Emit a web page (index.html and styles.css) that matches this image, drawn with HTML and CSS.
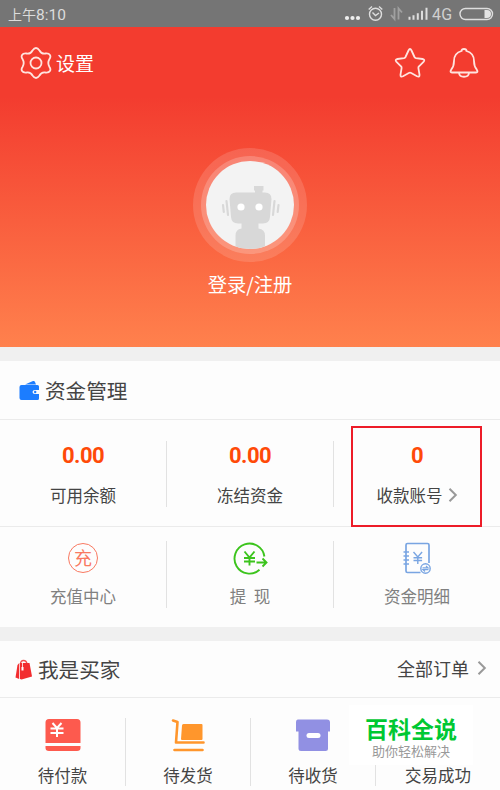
FILE: index.html
```html
<!DOCTYPE html>
<html lang="zh-CN"><head>
<meta charset="utf-8">
<title>我的</title>
<link rel="stylesheet" href="styles.css">
</head><body>

<div class="status">
<span class="time">上午<span class="digits">8:10</span></span>
<svg class="signals" width="156" height="27" viewBox="0 0 156 27" fill="none" stroke="#dedede" stroke-width="1.4">
<g fill="#eee" stroke="none"><circle cx="3" cy="18" r="2.1"/><circle cx="8.500" cy="18" r="2.1"/><circle cx="14" cy="18" r="2.1"/></g>
<circle cx="31.500" cy="14.200" r="6"/><path d="M28.500 12.500l3 3 3.500-2.500M24.700 9.500l3.300-3M38.300 9.500l-3.300-3"/>
<g stroke="#a0a0a0" stroke-width="1.800"><path d="M50.500 8v11l-3.500-4M54.500 19.500v-11l3.500 4"/></g>
<path d="M65.500 19.800v-3M69.500 19.800v-4.500M73.800 19.800v-6.500M78 19.800v-9M82.500 19.800v-12" stroke-width="2"/>
<text x="88" y="20" class="net">4G</text>
<rect x="116" y="8.500" width="32.500" height="11" rx="5.500"/><path d="M140.500 10h2.500a4 4 0 0 1 0 8h-2.500z" fill="#e4e4e4" stroke="none"/>
</svg>
</div>

<div class="hero">
<div class="bar">
<svg class="gear" width="32" height="34" viewBox="0 0 32 34"><path d="M12.500 4.500Q16 -0.500 19.500 4.500C21 7.500 22.500 8 25.500 7.500C30 7 31.500 10 29.500 13C27.700 16 27.700 18 29.500 21C31.500 24 30 27 25.500 26.500C22.500 26 21 26.500 19.500 29.500Q16 34.500 12.500 29.500C11 26.500 9.500 26 6.500 26.500C2 27 0.500 24 2.500 21C4.300 18 4.300 16 2.500 13C0.500 10 2 7 6.500 7.500C9.500 8 11 7.500 12.500 4.500Z"/><circle cx="16" cy="17" r="5.500"/></svg>
<span class="settings">设置</span>
<svg class="star" width="32" height="32" viewBox="0 0 32 32"><path d="M14.500 3.500Q16 .500 17.500 3.500L20.500 10Q21 11 22 11.200L28.500 12Q31.500 12.700 29.500 15L25 19.300Q24.200 20 24.400 21.200L25.500 27.500Q25.800 30.500 23 29.200L17.200 26Q16 25.400 14.800 26L9 29.200Q6.200 30.500 6.500 27.500L7.600 21.200Q7.800 20 7 19.300L2.500 15Q.500 12.700 3.500 12L10 11.200Q11 11 11.500 10Z"/></svg>
<svg class="bell" width="30" height="32" viewBox="0 0 30 32"><path d="M12.500 4Q12.500 2 15 2T17.500 4C23 5.500 25 9.500 25 14C25 18 25.500 20 27.800 22.700Q29.500 25.500 27 25.500H3Q.500 25.500 2.200 22.700C4.500 20 5 18 5 14C5 9.500 7 5.500 12.500 4ZM10 26C10.500 31 19.500 31 20 26"/></svg>
</div>
<div class="halo"><div class="ring">
<svg class="avatar" width="88" height="88" viewBox="0 0 88 88">
<defs><clipPath id="face"><circle cx="44" cy="44" r="44"/></clipPath></defs>
<circle cx="44" cy="44" r="44" fill="#f3f3f3"/>
<g clip-path="url(#face)" fill="#d8d8d8">
<path d="M49 33V29.500H48V25H57.500V29.500H56.500V33z"/>
<path d="M30 31.500H59Q65.500 31.500 65.500 38L64 56Q63.500 62.500 57 62.500H32Q25.500 62.500 25 56L23.500 38Q23.500 31.500 30 31.500z"/>
<path d="M35.500 62h17v5.500q6.500 1 6.500 7v15H29.500v-15q0-6 6-7z"/>
<path d="M20.500 40l1.500 14M17 44l.800 7M68.500 40L67 54M72.500 44l-.800 7" stroke="#d8d8d8" stroke-width="2.200" stroke-linecap="round"/>
</g>
<circle cx="35" cy="46" r="3.600" fill="#fff"/><circle cx="53" cy="46" r="3.600" fill="#fff"/>
</svg>
</div></div>
<div class="login">登录/注册</div>
</div>

<div class="card funds">
<div class="head">
<svg class="wallet" width="21" height="21" viewBox="0 0 21 21" fill="#1c7dff"><path d="M6 4.500L14 1Q15.500.500 16 2L17 4.500z"/><path d="M2.500 5H18.500Q20 5 20 6.500V10H16Q13.500 10 13.500 12T16 14H20V18.500Q20 20 18.500 20H2.500Q.500 20 .500 18V7Q.500 5 2.500 5z"/><circle cx="16.200" cy="12" r="1.200"/></svg>
<span class="title">资金管理</span>
</div>
<div class="row amounts">
<div class="cell"><b>0.00</b><span>可用余额</span></div>
<div class="cell"><b>0.00</b><span>冻结资金</span></div>
<div class="cell"><b>0</b><span class="account">收款账号<svg class="arrow" width="10" height="16" viewBox="0 0 10 16"><path d="M1.500 1.800L7.800 8 1.500 14.200"/></svg></span><div class="mark"></div></div>
</div>
<div class="row actions">
<div class="cell"><div class="charge">充</div><span>充值中心</span></div>
<div class="cell">
<svg width="36" height="34" viewBox="0 0 36 34" fill="none" stroke="#3cc41d" stroke-width="1.900"><path d="M32.400 15.500A15 15 0 1 0 27.500 28.800M24.500 21.500H34.500M30.500 17.500l4 4-4 4"/><path d="M12.500 10.500l5 6 5-6M17.500 16.500v8M12 17h11M12 20.500h11"/></svg>
<span>提&nbsp; 现</span></div>
<div class="cell">
<svg width="28" height="34" viewBox="0 0 28 34" fill="none" stroke="#79a5e2" stroke-width="1.700"><path d="M17.500 31.500H4.500Q3 31.500 3 30V4Q3 2.500 4.500 2.500H24.500Q26 2.500 26 4V22"/><path d="M.5 11h5.500M.5 15h5.500M.5 19h5.500M.5 23h5.500"/><path d="M10.500 11l4.300 5 4.300-5M14.800 16v7M10.500 16.800h8.600M10.500 19.500h8.600" stroke-width="1.400"/><circle cx="22.500" cy="27.500" r="4.700" stroke-width="1.400"/><path d="M19.500 26.800h5.500l-2-1.800M25.500 28.700H20l2 1.800" stroke-width="1.200"/></svg>
<span>资金明细</span></div>
</div>
</div>

<div class="card buyer">
<div class="head">
<svg class="bag" width="18" height="21" viewBox="0 0 18 21"><path d="M5.500 5Q5.500 1.500 8.500 1.500T12 5" fill="none" stroke="#f25050" stroke-width="1.300"/><path d="M5 4H14.500L17 17.500 6.500 20.500 5 20z" fill="#f22d2f"/><path d="M4.300 4L4.200 20 .500 18.500 2.500 6z" fill="#f22d2f"/><path d="M7.500 4v5" stroke="#fff" stroke-width=".8"/><path d="M6.500 8h2v3.500H6.500z" fill="#fff"/></svg>
<span class="title">我是买家</span>
<span class="orders">全部订单</span>
<svg class="arrow" width="10" height="16" viewBox="0 0 10 16"><path d="M1.500 1.800L7.800 8 1.500 14.200"/></svg>
</div>
<div class="row states">
<div class="cell">
<svg width="36" height="34" viewBox="0 0 36 34"><path d="M4 1H32Q35.500 1 35.500 4.500V25H.5V4.500Q.5 1 4 1zM.500 28H35.500V30Q35.500 33 32 33H4Q.5 33 .5 30z" fill="#fd5a4e"/><path d="M7.500 5l4.500 5 4.500-5M12 10v9M5.500 10.500h13M5.500 15h13" fill="none" stroke="#fff" stroke-width="2"/></svg>
<span>待付款</span></div>
<div class="cell">
<svg width="36" height="34" viewBox="0 0 36 34" fill="none" stroke="#ff962c" stroke-width="2.600" stroke-linecap="round" stroke-linejoin="round"><path d="M3 2.500L7.500 4 6 24.500H33.500M4.500 32H32.500"/><path d="M13.500 6H31.500Q32.500 6 32.500 7V21Q32.500 22 31.500 22H12Q11 22 11 21L12 7.500Q12 6 13.500 6z" fill="#ff962c" stroke="none"/></svg>
<span>待发货</span></div>
<div class="cell">
<svg width="36" height="34" viewBox="0 0 36 34"><path d="M3 1.500H32Q35 1.500 35 4.500V13.500H33V30.500Q33 33 30.500 33H6Q3.500 33 3.500 30.500V13.500H1V4.500Q1 1.500 3 1.500z" fill="#9190e3"/><rect x="11.500" y="15" width="14" height="5" rx="2.500" fill="#fff"/></svg>
<span>待收货</span></div>
<div class="cell"><span class="done">交易成功</span></div>
</div>
<div class="stamp"><strong>百科全说</strong><small>助你轻松解决</small></div>
</div>

</body></html>
```
FILE: styles.css
```css
*{box-sizing:border-box;}
body{margin:0;width:500px;height:790px;overflow:hidden;background:#f0f0f0;font-family:"Noto Sans CJK SC",sans-serif;color:#444;}
svg{display:block;flex:none;}

.status{display:flex;justify-content:space-between;height:27px;padding:0 0 0 8px;background:#757575;color:#dcdcdc;}
.time{font-size:14px;line-height:28px;}
.digits{font-family:Roboto,sans-serif;font-size:15.5px;}
.net{font-family:Roboto,sans-serif;font-size:16px;letter-spacing:.3px;fill:#d0d0d0;stroke:none;}

.hero{display:flex;flex-direction:column;align-items:center;height:320px;background:linear-gradient(#f33c2f 0,#f33c2f 70px,#ff814d 100%);color:#fff;}
.bar{display:flex;align-items:center;width:100%;height:72px;padding:0 21px 0 20px;}
.bar svg{fill:none;stroke:#ffe4df;stroke-width:1.8;}
.settings{margin-left:4px;font-size:19px;line-height:28px;}
.star{margin-left:auto;margin-right:23px;}
.halo{display:flex;align-items:center;justify-content:center;width:114px;height:114px;margin-top:49px;border-radius:50%;background:rgba(255,255,255,.14);}
.ring{padding:5px;border-radius:50%;background:rgba(255,255,255,.2);}
.login{margin-top:8px;font-size:19.3px;line-height:28px;}

.card{position:relative;background:#fdfdfd;}
.funds{height:266px;margin-top:14px;}
.buyer{height:149px;margin-top:14px;}
.head{display:flex;align-items:center;border-bottom:1px solid #ebebeb;}
.funds .head{height:59px;padding-left:19px;}
.buyer .head{height:57px;padding:0 13px 0 15px;}
.title{margin-left:5px;font-size:20.6px;line-height:30px;}
.orders{margin:-3px 8px 0 auto;font-size:18px;line-height:28px;}
.head .arrow{margin-top:-3px;}
.arrow{fill:none;stroke:#999;stroke-width:2;}

.row{display:grid;grid-template-columns:166px 167px 167px;}
.cell{position:relative;display:flex;flex-direction:column;align-items:center;border-left:1px solid #e2e2e2;font-size:16.5px;line-height:24px;}
.cell:first-child{border-left:0;}
.amounts{height:107px;padding:21px 0 20px;border-bottom:1px solid #ebebeb;}
.amounts b{margin-top:2px;color:#ff4a08;font-family:Roboto,sans-serif;font-size:22px;line-height:26px;letter-spacing:-.5px;}
.amounts span{margin-top:14px;}
.account{display:flex;align-items:center;}
.account .arrow{margin:-1px 0 0 5px;}
.mark{position:absolute;top:-15px;left:17px;width:131px;height:101px;border:2px solid #ed1c28;}

.actions{height:100px;padding:14px 0 20px;color:#808080;}
.actions span{margin-top:9px;}
.charge{width:30px;height:30px;margin:2px 0;border:1.5px solid #f97961;border-radius:50%;color:#f97961;font-size:18px;line-height:26px;text-align:center;}

.states{grid-template-columns:repeat(4,1fr);height:92px;padding-top:20px;}
.states .cell{height:68px;}
.states span{margin-top:11px;}
.states .done{margin-top:45px;}
.stamp{position:absolute;top:64px;left:349px;display:flex;flex-direction:column;align-items:center;width:124px;height:60px;padding-top:9px;background:#fff;}
.stamp strong{color:#00c832;font-size:23px;font-weight:700;line-height:29px;}
.stamp small{color:#999;font-size:13px;line-height:16px;}
```
